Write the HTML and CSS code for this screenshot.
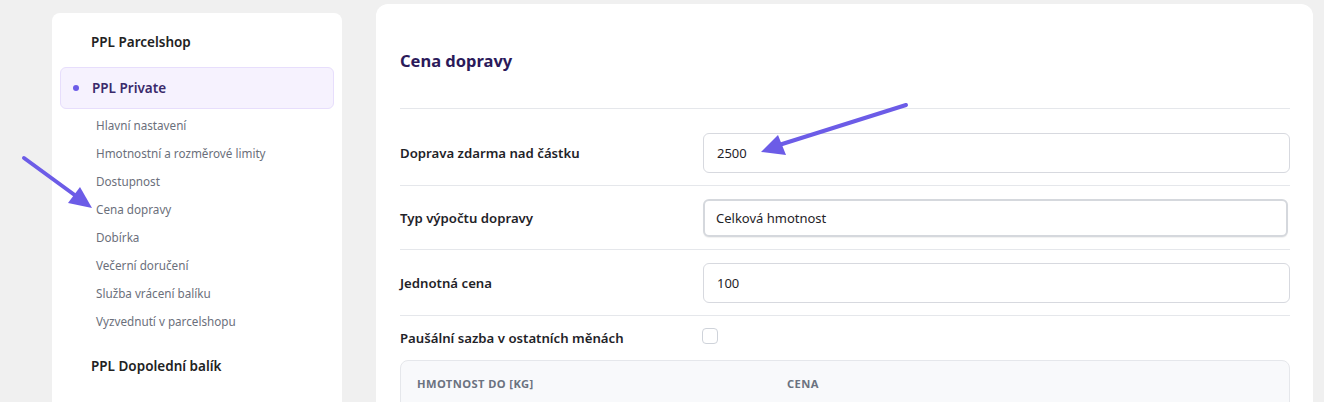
FILE: index.html
```html
<!DOCTYPE html>
<html lang="cs">
<head>
    <meta charset="UTF-8">
    <meta name="viewport" content="width=device-width, initial-scale=1.0">
    <title>PPL - Cena dopravy</title>
    <link rel="stylesheet" href="styles.css">
</head>
<body>
    <div class="layout">
        <aside class="sidebar">
            <div class="group-title">PPL Parcelshop</div>
            <div class="group-title active"><span class="dot"></span>PPL Private</div>
            <ul class="sub-menu">
                <li>Hlavní nastavení</li>
                <li>Hmotnostní a rozměrové limity</li>
                <li>Dostupnost</li>
                <li>Cena dopravy</li>
                <li>Dobírka</li>
                <li>Večerní doručení</li>
                <li>Služba vrácení balíku</li>
                <li>Vyzvednutí v parcelshopu</li>
            </ul>
            <div class="group-title last">PPL Dopolední balík</div>
        </aside>

        <main class="panel">
            <h2 class="panel-title">Cena dopravy</h2>
            <div class="form-row first">
                <label class="form-label">Doprava zdarma nad částku</label>
                <div class="form-field"><input class="input" type="text" value="2500"></div>
            </div>
            <div class="form-row">
                <label class="form-label">Typ výpočtu dopravy</label>
                <div class="form-field"><div class="input select">Celková hmotnost</div></div>
            </div>
            <div class="form-row">
                <label class="form-label">Jednotná cena</label>
                <div class="form-field"><input class="input" type="text" value="100"></div>
            </div>
            <div class="form-row check-row">
                <label class="form-label">Paušální sazba v ostatních měnách</label>
                <div class="form-field"><span class="checkbox"></span></div>
            </div>
            <div class="table">
                <div class="table-head">
                    <div class="th th-weight">Hmotnost do [kg]</div>
                    <div class="th">Cena</div>
                </div>
            </div>
        </main>
    </div>

    <!-- annotation arrows -->
    <svg class="arrow arrow-left" width="90" height="70" viewBox="0 0 90 70">
        <line x1="4" y1="3" x2="56" y2="41" stroke="#6c5ce7" stroke-width="4" stroke-linecap="round"/>
        <polygon points="72,53 48,48 60,32" fill="#6c5ce7"/>
    </svg>
    <svg class="arrow arrow-right" width="160" height="60" viewBox="0 0 160 60">
        <line x1="155" y1="5" x2="28" y2="45" stroke="#6c5ce7" stroke-width="4" stroke-linecap="round"/>
        <polygon points="10,52 27,35 35,55" fill="#6c5ce7"/>
    </svg>
</body>
</html>
```

FILE: styles.css
```css
* {
    box-sizing: border-box;
    margin: 0;
    padding: 0;
}

body {
    background-color: #f0f0f0;
    font-family: 'Noto Sans', 'Open Sans', sans-serif;
    color: #1f2328;
    overflow: hidden;
    height: 100vh;
}

.layout {
    display: flex;
    align-items: flex-start;
    gap: 34px;
    padding: 4px 11px 0 52px;
}

.sidebar {
    width: 290px;
    flex-shrink: 0;
    margin-top: 9px;
    background-color: #fff;
    border-radius: 8px;
    padding: 8px 8px 30px;
    min-height: 420px;
}

.group-title {
    display: flex;
    align-items: center;
    height: 42px;
    padding-left: 31px;
    font-size: 13.5px;
    font-weight: 600;
    color: #222;
}

.group-title.active {
    margin-top: 4px;
    padding-left: 12px;
    background-color: #f6f2fe;
    border: 1px solid #e7defc;
    border-radius: 6px;
    color: #3a2a6b;
}

.group-title.last {
    margin-top: 10px;
}

.dot {
    width: 6px;
    height: 6px;
    border-radius: 50%;
    background-color: #6c5ce7;
    margin-right: 13px;
}

.sub-menu {
    list-style: none;
    padding: 2px 0 0 36px;
}

.sub-menu li {
    height: 28px;
    line-height: 28px;
    font-size: 11.7px;
    color: #6b6f7b;
}

.panel {
    flex: 1;
    background-color: #fff;
    border-radius: 12px;
    padding: 0 23px 0 24px;
    min-height: 420px;
}

.panel-title {
    font-size: 16.5px;
    font-weight: 700;
    color: #2b1a5a;
    padding: 44px 0 34px;
    line-height: 26px;
    border-bottom: 1px solid #e5e7eb;
}

.form-row {
    display: flex;
    align-items: center;
    padding: 13px 0 12px;
    border-bottom: 1px solid #e5e7eb;
}

.form-row.first {
    padding-top: 24px;
}

.form-label {
    width: 303px;
    flex-shrink: 0;
    font-size: 13.2px;
    font-weight: 600;
    color: #1f2328;
}

.form-field {
    flex: 1;
    display: flex;
}

.input {
    width: 100%;
    height: 40px;
    border: 1px solid #d7d9df;
    border-radius: 6px;
    padding: 0 13px;
    font-family: inherit;
    font-size: 13px;
    color: #1f2328;
    background-color: #fff;
    outline: none;
}

.select {
    display: flex;
    align-items: center;
    height: 38px;
    margin-right: 2px;
    border: 2px solid #d5d8dd;
    padding: 0 11px;
    box-shadow: 0 1px 1px rgba(0, 0, 0, 0.06);
}

.check-row {
    border-bottom: none;
    padding: 12px 0 0;
    align-items: flex-start;
}

.check-row .form-label {
    padding-top: 1px;
}

.checkbox {
    width: 16px;
    height: 16px;
    margin-left: -1px;
    border: 1px solid #cfd3da;
    border-radius: 4px;
}

.table {
    margin-top: 13px;
    border: 1px solid #e5e7eb;
    border-radius: 8px;
    background-color: #f8f9fb;
    height: 80px;
}

.table-head {
    display: flex;
    height: 44px;
    align-items: center;
    padding-left: 16px;
}

.th {
    font-size: 11.2px;
    font-weight: 700;
    letter-spacing: 0.4px;
    text-transform: uppercase;
    color: #6b7280;
}

.th-weight {
    width: 370px;
}

.arrow {
    position: absolute;
}

.arrow-left {
    left: 20px;
    top: 155px;
}

.arrow-right {
    left: 751px;
    top: 100px;
}
```
